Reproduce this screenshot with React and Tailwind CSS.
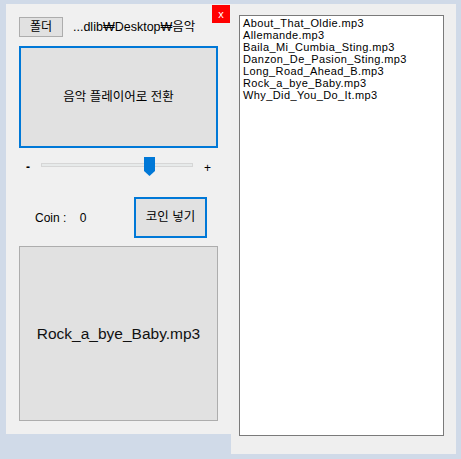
import React from 'react';

const songs = [
  'About_That_Oldie.mp3',
  'Allemande.mp3',
  'Baila_Mi_Cumbia_Sting.mp3',
  'Danzon_De_Pasion_Sting.mp3',
  'Long_Road_Ahead_B.mp3',
  'Rock_a_bye_Baby.mp3',
  'Why_Did_You_Do_It.mp3',
];

const font = { fontFamily: '"Liberation Sans", "Noto Sans CJK KR", sans-serif' };

const App = () => {
  return (
    <div className="w-[461px] h-[459px] bg-[#d0dae8] pt-[4px] pl-[6px] flex items-start text-black" style={font}>
      {/* left panel */}
      <div className="relative w-[225px] h-[430px] bg-[#f0f0f0] flex flex-col px-[13px] pt-[13px]">
        <button className="absolute top-[1px] right-[1px] w-[18px] h-[18px] bg-[#ff0000] text-white text-[11px] leading-none flex items-center justify-center">x</button>

        <div className="h-[20px] flex items-center">
          <button className="w-[44px] h-[20px] bg-[#e1e1e1] border border-[#adadad] text-[12px] flex items-center justify-center">폴더</button>
          <span className="ml-[10px] text-[12.5px] whitespace-nowrap">...dlib₩Desktop₩음악</span>
        </div>

        <button className="mt-[9px] w-[199px] h-[102px] bg-[#e1e1e1] border-2 border-[#0078d7] text-[12.5px] flex items-center justify-center">
          음악 플레이어로 전환
        </button>

        {/* slider */}
        <div className="relative mt-[9px] h-[19px] w-[199px]">
          <span className="absolute left-[7px] top-[4px] text-[12px] font-bold leading-none">-</span>
          <div className="absolute left-[22px] top-[6px] w-[152px] h-[4px] bg-[#e7eaea] border border-[#d6d6d6]" />
          <svg className="absolute left-[125px] top-0" width="11" height="19" viewBox="0 0 11 19">
            <polygon points="0,0 11,0 11,14 5.5,19 0,14" fill="#0078d7" />
          </svg>
          <span className="absolute left-[185px] top-[5px] text-[12px] leading-none">+</span>
        </div>

        <div className="mt-[21px] h-[41px] flex items-center">
          <span className="ml-[16px] w-[99px] text-[12px] whitespace-pre">Coin :    0</span>
          <button className="w-[73px] h-[41px] bg-[#e1e1e1] border-2 border-[#0078d7] text-[12.5px] flex items-center justify-center">
            코인 넣기
          </button>
        </div>

        <div className="mt-[8px] w-[199px] h-[175px] bg-[#e1e1e1] border border-[#adadad] flex items-center justify-center text-[15.5px] text-[#111]">
          Rock_a_bye_Baby.mp3
        </div>
      </div>

      {/* right panel */}
      <div className="w-[225px] h-[450px] bg-[#efefef] pl-[8px] pt-[11px]">
        <div className="w-[205px] h-[421px] bg-white border border-[#7a7a7a] px-[3px] pt-[1px]">
          {songs.map((s) => (
            <div key={s} className="text-[11px] tracking-[0.4px] leading-[12px] h-[12px] whitespace-nowrap">{s}</div>
          ))}
        </div>
      </div>
    </div>
  );
};

export default App;
